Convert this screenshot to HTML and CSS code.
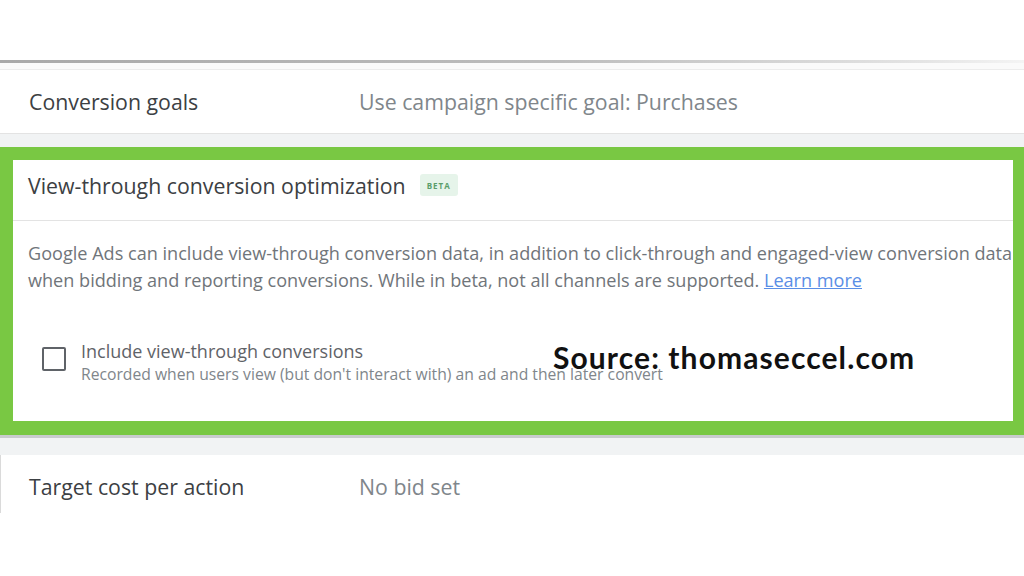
FILE: index.html
```html
<!DOCTYPE html>
<html lang="en">
<head>
    <meta charset="UTF-8">
    <meta name="viewport" content="width=device-width, initial-scale=1.0">
    <title>Bidding settings</title>
    <link rel="stylesheet" href="styles.css">
</head>
<body>
    <div class="panel">
        <div class="edge"></div>
        <div class="strip"></div>
        <div class="row">
            <span class="label">Conversion goals</span>
            <span class="value">Use campaign specific goal: Purchases</span>
        </div>
        <div class="gap"></div>

        <div class="card">
            <div class="card-head">
                <h2>View-through conversion optimization</h2>
                <span class="badge">BETA</span>
            </div>
            <div class="card-body">
                <p class="desc">Google Ads can include view-through conversion data, in addition to click-through and engaged-view conversion data<br>when bidding and reporting conversions. While in beta, not all channels are supported. <a href="#">Learn more</a></p>
                <label class="check">
                    <span class="box"></span>
                    <span class="check-text">
                        <span class="check-title">Include view-through conversions</span>
                        <span class="check-sub">Recorded when users view (but don't interact with) an ad and then later convert</span>
                    </span>
                </label>
            </div>
            <div class="source">Source: thomaseccel.com</div>
        </div>

        <div class="gap gap-low"></div>
        <div class="row row-last">
            <span class="label">Target cost per action</span>
            <span class="value">No bid set</span>
        </div>
    </div>
</body>
</html>
```

FILE: styles.css
```css
/* styles.css */
body {
    margin: 0;
    padding: 0;
    background: #fff;
    font-family: "Open Sans", Roboto, Arial, sans-serif;
    overflow: hidden;
}

.panel {
    padding-top: 60px;
}

/* shadow line at the top of the panel */
.edge {
    height: 3px;
    background: linear-gradient(to right, #a9a9a9, #bdbdbd 55%, #e4e4e4 90%, #f4f4f4);
}
.strip {
    height: 6px;
    background: #fafafa;
    border-bottom: 1px solid #ececec;
}

.row {
    display: flex;
    align-items: center;
    height: 63px;
    padding-left: 29px;
    background: #fff;
}
.label {
    width: 330px;
    font-size: 21.3px;
    color: #3c4043;
}
.value {
    font-size: 21.3px;
    color: #80868b;
}
.row-last {
    height: 58px;
    align-items: flex-start;
    padding-top: 18px;
    box-sizing: border-box;
    border-left: 1px solid #dadada;
    padding-left: 28px;
}
.row-last .label,
.row-last .value {
    line-height: 28px;
}

.gap {
    height: 13px;
    background: #f1f3f4;
    border-top: 1px solid #e3e3e3;
}
.gap-low {
    height: 17px;
    border-top: 3px solid #c9cbcd;
}

/* highlighted card */
.card {
    position: relative;
    background: #fff;
    border: 13px solid #79c843;
    border-right-width: 11px;
    border-bottom-width: 14px;
    overflow: hidden;
}
.card-head {
    display: flex;
    align-items: center;
    height: 50px;
    padding-left: 15px;
    padding-bottom: 10px;
    border-bottom: 1px solid #e3e3e3;
}
.card-head h2 {
    margin: 0;
    font-size: 21.3px;
    font-weight: 400;
    color: #3c4043;
}
.badge {
    margin-left: 14px;
    padding: 6px 7px 5px;
    border-radius: 3px;
    background: #e6f4ea;
    color: #5a9e6a;
    font-size: 8px;
    font-weight: 700;
    letter-spacing: 1px;
}

.card-body {
    padding: 19px 0 38px 15px;
}
.desc {
    margin: 0;
    font-size: 18.1px;
    line-height: 27px;
    color: #70757a;
    white-space: nowrap;
}
.desc a {
    color: #5a8ee6;
    text-decoration: underline;
}

.check {
    display: flex;
    align-items: flex-start;
    margin-top: 46px;
    padding-left: 14px;
}
.box {
    width: 20px;
    height: 20px;
    margin-top: 7px;
    border: 2px solid #5f6368;
    border-radius: 2px;
    flex-shrink: 0;
}
.check-text {
    display: flex;
    flex-direction: column;
    margin-left: 15px;
}
.check-title {
    font-size: 18px;
    line-height: 22px;
    color: #5f6368;
}
.check-sub {
    margin-top: 3px;
    font-size: 15.7px;
    line-height: 18px;
    color: #80868b;
}

/* watermark over the card */
.source {
    position: absolute;
    top: 179px;
    left: 540px;
    font-family: Lato, "Open Sans", sans-serif;
    font-size: 30px;
    line-height: 36px;
    font-weight: 700;
    color: #111;
    letter-spacing: 1.1px;
}
```
